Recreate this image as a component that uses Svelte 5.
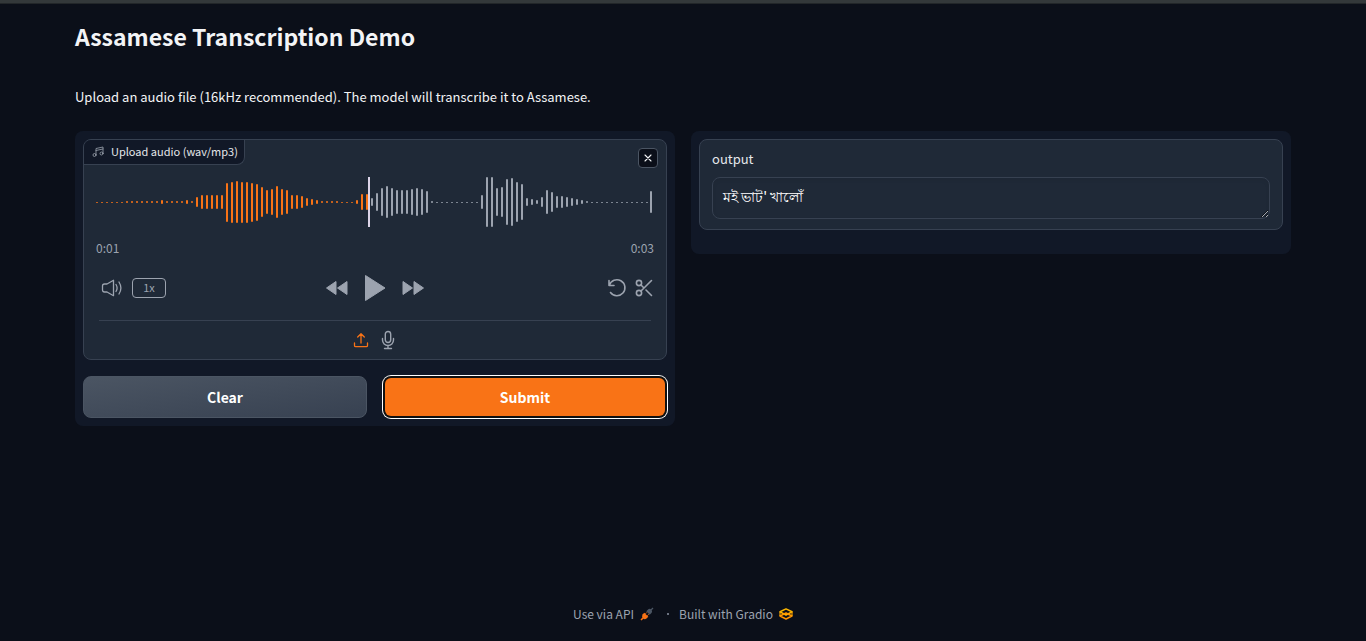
<script>
  const runs = [
    [1, 6], [2, 7], [4, 1], [2, 4], [4, 1], [2, 1], [10, 1], [14, 5], [39, 1], [41, 1], [42, 1], [41, 2],
    [39, 1], [37, 1], [30, 1], [24, 1], [26, 1], [32, 1], [26, 1], [24, 1], [14, 2], [12, 1], [8, 1], [6, 1],
    [4, 1], [2, 4], [1, 3], [4, 1], [16, 2], [8, 1], [18, 1], [28, 1], [32, 1], [28, 1], [24, 3], [26, 1],
    [28, 1], [26, 1], [22, 1], [2, 1], [1, 9], [14, 1], [50, 2], [28, 1], [30, 1], [46, 1], [48, 1], [40, 1],
    [36, 1], [8, 1], [6, 1], [4, 1], [10, 1], [24, 1], [20, 1], [12, 2], [10, 1], [8, 1], [6, 1], [4, 1],
    [2, 1], [1, 12], [22, 1]
  ];
  const bars = runs.flatMap(([height, count]) => Array(count).fill(height));
  const played = 55;
  let output = $state("মই ভাট' খালোঁ");
</script>

<div class="topbar"></div>
<div class="page">
  <main>
    <h1>Assamese Transcription Demo</h1>
    <p class="intro">Upload an audio file (16kHz recommended). The model will transcribe it to Assamese.</p>

    <div class="columns">
      <section class="column">
        <div class="card audio">
          <div class="tag">
            <svg width="12" height="12" viewBox="0 0 24 24" fill="none" stroke="currentColor" stroke-width="1.6" stroke-linecap="round" stroke-linejoin="round">
              <path d="M8 18V5l14-3v13M8 9l14-3" /><circle cx="5" cy="18" r="3" /><circle cx="19" cy="15" r="3" />
            </svg>
            <span>Upload audio (wav/mp3)</span>
          </div>
          <button class="close" aria-label="Clear audio">
            <svg width="10" height="10" viewBox="0 0 10 10" stroke="currentColor" stroke-width="1.1" stroke-linecap="round"><path d="M2 2l6 6M8 2l-6 6" /></svg>
          </button>

          <svg class="wave" viewBox="0 0 558 50" preserveAspectRatio="none" shape-rendering="crispEdges">
            {#each bars as h, i}
              {@const x = i === bars.length - 1 ? 554 : i * 5}
              {@const y = 25 - Math.floor(h / 2)}
              {@const fill = i < played ? '#f97316' : '#9ca3af'}
              <rect {x} {y} width="2" height={h} {fill} opacity="0.75" />
              {#if h > 2}
                <rect {x} y={y + 1} width="2" height={h - 2} {fill} />
              {/if}
            {/each}
            <rect x="272" y="0" width="2" height="50" fill="#ddd5e9" />
          </svg>

          <div class="times"><time>0:01</time><time>0:03</time></div>

          <div class="controls">
            <div class="group">
              <button class="icon" aria-label="Adjust volume">
                <svg width="22" height="18" viewBox="0 0 22 18" fill="none" stroke="currentColor" stroke-width="1.3" stroke-linejoin="round" stroke-linecap="round">
                  <path d="M1.500 7q0-2 2-2h2.500L12.500 1.300v15.400L6 13H3.500q-2 0-2-2zM15 5.500q2.200 3.500 0 7M18 3q3.800 6 0 12" />
                </svg>
              </button>
              <button class="speed" aria-label="Playback speed 1x">1x</button>
            </div>
            <div class="group play">
              <button class="icon" aria-label="Skip backwards">
                <svg width="24" height="16" viewBox="0 0 24 16" fill="currentColor" stroke="currentColor" stroke-linejoin="round"><path d="M1.500 8l9.500-6.500v13zM12.500 8L22 1.500v13z" /></svg>
              </button>
              <button class="icon" aria-label="Play">
                <svg width="22" height="28" viewBox="0 0 22 28" fill="currentColor" stroke="currentColor" stroke-linejoin="round"><path d="M1.500 1.500v25L21 14z" /></svg>
              </button>
              <button class="icon" aria-label="Skip forward">
                <svg width="24" height="16" viewBox="0 0 24 16" fill="currentColor" stroke="currentColor" stroke-linejoin="round"><path d="M22.500 8L13 1.500v13zM11.500 8L2 1.500v13z" /></svg>
              </button>
            </div>
            <div class="group edit">
              <button class="icon" aria-label="Reset audio">
                <svg width="20" height="20" viewBox="0 0 20 20" fill="none" stroke="currentColor" stroke-width="1.6" stroke-linecap="round" stroke-linejoin="round"><path d="M2 2.500v5h5M2.300 7.300A8 8 0 1 1 3.500 14.500" /></svg>
              </button>
              <button class="icon" aria-label="Trim audio">
                <svg width="18" height="18" viewBox="0 0 18 18" fill="none" stroke="currentColor" stroke-width="1.600" stroke-linecap="round" stroke-linejoin="round"><circle cx="4" cy="4" r="2.600" /><circle cx="4" cy="14" r="2.600" /><path d="M16.500 1.500L6 12M11 11l5.500 5.500M6 6l3 3" /></svg>
              </button>
            </div>
          </div>

          <div class="sources">
            <button class="icon active" aria-label="Upload file">
              <svg width="16" height="16" viewBox="0 0 16 16" fill="none" stroke="currentColor" stroke-width="1.300" stroke-linecap="round" stroke-linejoin="round"><path d="M1.500 11v2.500q0 1.200 1.200 1.200h10.600q1.200 0 1.200-1.200V11M8 11V2M4.700 5L8 1.700 11.300 5" /></svg>
            </button>
            <button class="icon" aria-label="Record audio">
              <svg width="14" height="20" viewBox="0 0 14 20" fill="none" stroke="currentColor" stroke-width="1.400" stroke-linecap="round" stroke-linejoin="round"><rect x="4.300" y="1.500" width="5.400" height="11" rx="2.700" /><path d="M1.500 8.500v1.500a5.500 5.500 0 0 0 11 0V8.500M7 15.500V18.500M3.500 18.500h7" /></svg>
            </button>
          </div>
        </div>

        <div class="actions">
          <button class="action clear">Clear</button>
          <button class="action submit">Submit</button>
        </div>
      </section>

      <section class="column result">
        <div class="card output">
          <label for="output">output</label>
          <textarea id="output" rows="1" bind:value={output}></textarea>
        </div>
      </section>
    </div>
  </main>

  <footer>
    <button class="foot">
      Use via API
      <svg width="14" height="14" viewBox="0 0 14 14">
        <path d="M10.500 3.500L13 1" stroke="#4b5563" stroke-width="1.200" />
        <path d="M6.300 4.300L8.300 2.300Q9.900 1.200 11.300 2.700T11.700 5.700L9.700 7.700z" fill="#4b5563" />
        <path d="M3.500 10.500L1 13" stroke="#f97316" stroke-width="1.600" />
        <path d="M4.300 5.700L8.300 9.700 6.500 11.500Q4.600 13 3 11.300T2.500 7.500z" fill="#f97316" />
        <path d="M5.500 6.700l1.200-1.200M7.400 8.600l1.200-1.200" stroke="#f97316" />
      </svg>
    </button>
    <span class="dot"></span>
    <a class="foot" href="#gradio">
      Built with Gradio
      <svg width="14" height="12" viewBox="0 0 14 12" fill="none" stroke-linejoin="round">
        <path d="M1 3.800L7 .9l6 2.900L7 7z" stroke="#ffb800" stroke-width="1.500" />
        <path d="M1 8L7 11l6-3L7 5z" stroke="#ff9400" stroke-width="1.500" />
        <path d="M1 3.800V8M13 3.800V8" stroke="#ffa600" stroke-width="1.100" />
      </svg>
    </a>
  </footer>
</div>

<style>
  :global(body) {
    background: #0b0f19;
  }
  :global(#app) {
    display: flex;
    flex-direction: column;
    min-height: 100vh;
    font-family: "Noto Sans CJK SC", "Noto Sans", sans-serif;
    color: #f3f4f6;
  }
  * {
    box-sizing: border-box;
  }
  button,
  textarea {
    font: inherit;
    color: inherit;
  }
  button {
    padding: 0;
    border: 0;
    background: none;
    cursor: pointer;
  }
  svg {
    display: block;
    flex: none;
  }
  .topbar {
    height: 4px;
    background: #33383a;
    border-bottom: 1px solid #222629;
  }
  .page {
    flex: 1;
    display: flex;
    flex-direction: column;
    justify-content: space-between;
    width: 100%;
    max-width: 1280px;
    margin: 0 auto;
    padding: 16px 32px;
  }
  h1 {
    margin: 0;
    font-size: 23px;
    font-weight: 600;
    line-height: 32px;
  }
  .intro {
    margin: 35px 0 24px;
    font-size: 13px;
    line-height: 20px;
  }
  .columns {
    display: grid;
    grid-template-columns: 1fr 1fr;
    gap: 16px;
    align-items: start;
  }
  .column {
    padding: 8px;
    border-radius: 8px;
    background: #111827;
    min-width: 0;
  }
  .result {
    padding-bottom: 24px;
  }
  .card {
    position: relative;
    border: 1px solid #374151;
    border-radius: 8px;
    background: #1f2937;
    overflow: hidden;
  }
  .audio {
    padding: 37px 12px 9px;
    color: #9ca3af;
  }
  .tag {
    position: absolute;
    top: 0;
    left: 0;
    display: flex;
    align-items: center;
    gap: 7px;
    height: 25px;
    padding: 0 6px 0 8px;
    border: solid #374151;
    border-width: 0 1px 1px 0;
    border-bottom-right-radius: 8px;
    background: #111827;
    font-size: 11px;
    line-height: 16px;
  }
  .tag span {
    padding-bottom: 2px;
    color: #e5e7eb;
  }
  .close {
    position: absolute;
    top: 8px;
    right: 8px;
    display: grid;
    place-items: center;
    width: 20px;
    height: 20px;
    border: 1px solid #4b5563;
    border-radius: 4px;
    background: #0b0f19;
    color: #f3f4f6;
  }
  .wave {
    width: 100%;
    height: 50px;
  }
  .times {
    display: flex;
    justify-content: space-between;
    margin-top: 11px;
    font-size: 12px;
    line-height: 20px;
  }
  .controls {
    display: grid;
    grid-template-columns: 1fr auto 1fr;
    align-items: center;
    height: 32px;
    margin: 14px 0 16px;
  }
  .group {
    display: flex;
    align-items: center;
    gap: 9px;
    padding-left: 5px;
  }
  .play {
    gap: 15px;
    padding: 0;
  }
  .edit {
    gap: 8px;
    justify-content: flex-end;
    padding: 0 1px 0 0;
  }
  .speed {
    width: 34px;
    height: 20px;
    padding-bottom: 2px;
    border: 1px solid #9ca3af;
    border-radius: 4px;
    font-size: 11px;
    line-height: 16px;
  }
  .sources {
    display: flex;
    justify-content: center;
    align-items: center;
    gap: 12px;
    margin: 0 3px;
    padding: 9px 2px 0 0;
    border-top: 1px solid #374151;
  }
  .active {
    color: #f97316;
  }
  .actions {
    display: grid;
    grid-template-columns: 1fr 1fr;
    gap: 16px;
    margin-top: 16px;
  }
  .action {
    height: 42px;
    border-radius: 8px;
    font-size: 14px;
    font-weight: 600;
    color: #fff;
  }
  .clear {
    border: 1px solid #4b5563;
    background: linear-gradient(to bottom right, #4b5563, #374151);
  }
  .submit {
    margin: 2px;
    height: 38px;
    border-radius: 6px;
    background: #f97316;
    box-shadow: 0 0 0 2px #101010, 0 0 0 3px #fff;
  }
  .output {
    padding: 11px 12px 10px;
  }
  label {
    display: block;
    margin-bottom: 10px;
    font-size: 13px;
    line-height: 16px;
    color: #e5e7eb;
  }
  textarea {
    display: block;
    width: 100%;
    height: 42px;
    padding: 8px 10px 12px;
    border: 1px solid #374151;
    border-radius: 8px;
    outline: 0;
    background: #1f2937;
    box-shadow: inset 0 2px 4px rgb(0 0 0 / 5%);
    font-size: 14px;
    line-height: 20px;
    color: #fff;
    resize: vertical;
    color-scheme: dark;
  }
  footer {
    display: flex;
    justify-content: center;
    align-items: center;
    padding-bottom: 1px;
    color: #9ca3af;
    font-size: 12px;
    line-height: 20px;
  }
  .foot {
    display: flex;
    align-items: center;
    gap: 6px;
    color: inherit;
    text-decoration: none;
  }
  .dot {
    width: 2px;
    height: 2px;
    margin: 0 10px 0 13px;
    background: #6b7280;
  }
</style>
